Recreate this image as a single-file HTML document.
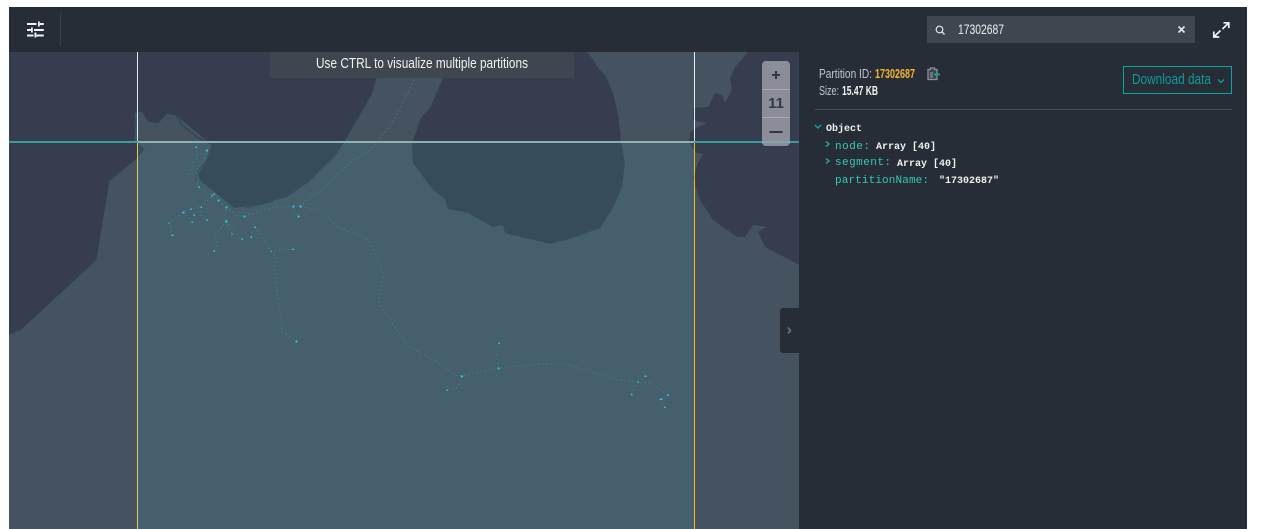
<!DOCTYPE html>
<html><head><meta charset="utf-8"><style>
html,body{margin:0;padding:0;background:#fff;width:1263px;height:529px;overflow:hidden}
svg{display:block}
text{font-family:"Liberation Sans",sans-serif}
.m{font-family:"Liberation Mono",monospace}
.t{fill:none;stroke:#2aa6c4;stroke-width:.7;stroke-dasharray:1 3.2;stroke-opacity:.85}
.n{fill:#27c8e2}
</style></head><body>
<svg width="1263" height="529" viewBox="0 0 1263 529" xmlns="http://www.w3.org/2000/svg">
<rect width="1263" height="529" fill="#fff"/>
<rect x="9" y="7" width="1238" height="522" fill="#272d37"/>
<rect x="9" y="52" width="790" height="477" fill="#455361"/>
<path fill="#353d4e" d="M9 52H386L376 78 372 93 343 143 334 157 310 181 287 197 257 205 235 208 200 180 199 173 207 160 212 145 176 115 167 113 158 123 148 121 142 112 134 113 134 140 145 149 137 158 109 181 96 260 20 330 9 334Z"/>
<path fill="#353d4e" d="M450 52H587L592 58 598 68 605 75 613 93 618 113 621 140 625 163 622 187 613 208 600 228 573 238 550 244 505 233 503 225 493 227 468 213 448 209 445 199 433 190 413 163 412 143 421 118 430 108 443 78Z"/>
<path fill="#353d4e" d="M693 108 708 107 715 93 722 95 725 103 732 90 730 78 735 67 743 58 748 52H799V265L765 247 758 232 767 227 753 225 745 237 737 237 713 220 700 200 693 178 698 163 703 154 695 152 689 142 690 132 698 127 707 123 700 122 693 120Z"/>
<path fill="none" stroke="#2f4450" stroke-width="1.200" d="M376 78 372 93 343 143 334 157 M334 157 300 186 270 202 245 208 M196 182 197 172 207 160 212 145 197 137 182 125 176 115 167 113 158 123 148 121 142 111 134 113 135 125 134 140"/>
<path fill="none" stroke="#30414f" stroke-width=".8" d="M137 158 109 181 96 260 20 330 9 334M235 208 200 180 199 173"/>
<rect x="138" y="142" width="556" height="387" fill="rgba(80,213,207,.1)"/>

<g class="t">
<path d="M196 147 198 157 194 162 188 177"/>
<path d="M207 150 205 158 197 170 196 180 199 187 212 195 214 194"/>
<path d="M214 194 201 207 191 209 183 212 169 223 171 230 172 235"/>
<path d="M191 209 194 215M183 212 192 222M201 207 201 215 207 220"/>
<path d="M214 194 218 200 226 207 224 220 226 221 214 238 218 243 214 251"/>
<path d="M226 221 242 239M226 221 232 234"/>
<path d="M226 207 237 216 244 216 255 227 251 237M255 227 271 251 277 258 274 265 277 290 279 307 282 323 282 332 296 341"/>
<path d="M271 251 293 249"/>
<path d="M244 216 270 208 293 206 298 216M293 206 300 206 322 211 337 227 368 239 378 258 383 273 379 303 397 330 410 348 432 359 457 376 462 376 498 368 530 365 563 363 617 380 638 382 650 383 668 395"/>
<path d="M300 206 327 185 335 177 350 163 370 150 387 130 400 108 415 78"/>
<path d="M462 376 458 387 447 390M498 368 497 350 499 343M638 382 645 376M638 382 631 394M668 395 662 399 660 399M662 399 664 407"/>
</g>
<g class="n">
<rect x="195.500" y="146.500" width="1.500" height="1.500"/><rect x="206" y="149.500" width="2" height="2"/><rect x="198.500" y="186.500" width="1.500" height="1.500"/><rect x="211.500" y="195" width="1.500" height="1.500"/><rect x="213.500" y="193.500" width="1.500" height="1.500"/><rect x="200.500" y="206.500" width="1.500" height="1.500"/><rect x="190.500" y="208.500" width="1.500" height="1.500"/><rect x="182.500" y="211.500" width="2" height="2"/><rect x="168.500" y="222.500" width="1.200" height="1.200"/><rect x="171.500" y="234.500" width="2" height="1.500"/><rect x="193.500" y="214.500" width="1.500" height="1.500"/><rect x="191.500" y="221.500" width="1.500" height="1.500"/><rect x="206.500" y="219.500" width="1.500" height="1.500"/><rect x="217.500" y="199.500" width="2" height="2"/><rect x="225.500" y="206.500" width="2" height="2"/><rect x="225" y="220.500" width="2.500" height="2"/><rect x="213.500" y="250.500" width="1.500" height="1.500"/><rect x="241.500" y="238.500" width="1.500" height="1.500"/><rect x="231.500" y="233.500" width="1.200" height="1.200"/><rect x="243.500" y="215.500" width="2" height="2"/><rect x="254.500" y="226.500" width="1.500" height="1.500"/><rect x="250.500" y="236.500" width="1.500" height="1.500"/><rect x="270.500" y="250.500" width="1.200" height="1.200"/><rect x="295.500" y="340.500" width="2" height="2"/><rect x="292.500" y="248.500" width="1.500" height="1.500"/><rect x="292.500" y="205.500" width="2" height="2"/><rect x="297.500" y="215.500" width="2" height="2"/><rect x="299.500" y="205.500" width="2" height="2"/>
<rect x="461" y="375.500" width="2" height="2"/><rect x="446.500" y="389.500" width="1.500" height="1.500"/><rect x="498" y="367.500" width="1.500" height="2"/><rect x="498.500" y="342.500" width="1.500" height="1.500"/><rect x="637.500" y="381.500" width="1.500" height="1.500"/><rect x="644.500" y="375.500" width="2" height="1.500"/><rect x="631" y="394" width="1.500" height="1.500"/><rect x="667.500" y="394.500" width="1.500" height="1.500"/><rect x="659.500" y="398.500" width="3" height="1.500"/><rect x="664" y="406.500" width="1.500" height="1.500"/>
</g>

<rect x="9" y="141" width="129" height="2" fill="#3a9a9c"/>
<rect x="138" y="141" width="556" height="2" fill="#8fb0b0"/>
<rect x="694" y="141" width="105" height="2" fill="#3a9a9c"/>
<rect x="137" y="52" width="1" height="89" fill="#d8f0f5"/>
<rect x="137" y="143" width="1" height="386" fill="#e9c75c"/>
<rect x="694" y="52" width="1" height="89" fill="#d8f4f5"/>
<rect x="694" y="143" width="1" height="386" fill="#f5b921"/>

<rect x="270" y="52" width="304" height="26" fill="#3f4650"/>
<text x="316" y="68" font-size="14.500" fill="#f2f2f2" textLength="212" lengthAdjust="spacingAndGlyphs">Use CTRL to visualize multiple partitions</text>

<rect x="762" y="61" width="28" height="85" rx="4" fill="#8b8e9a"/>
<rect x="762" y="89" width="28" height="1" fill="#a8abb5"/>
<rect x="762" y="117" width="28" height="1" fill="#a8abb5"/>
<rect x="762" y="141" width="28" height="2" fill="#7fa6ab"/>
<path d="M772 75H780M776 71V79" stroke="#33383f" stroke-width="2"/>
<text x="776" y="108" text-anchor="middle" font-size="15" font-weight="bold" fill="#33383f">11</text>
<rect x="769.500" y="131" width="13" height="2" fill="#33383f"/>

<path d="M799 308H783a3 3 0 0 0-3 3V350a3 3 0 0 0 3 3H799Z" fill="#272d37"/>
<path d="M788 327.500 790.500 330.500 788 333.500" fill="none" stroke="#6f7680" stroke-width="1.500"/>

<rect x="60" y="13" width="1" height="33" fill="#3a404a"/>
<g fill="#f2f2f2">
<rect x="27" y="23" width="9.500" height="2"/><rect x="38" y="21.500" width="1.800" height="5"/><rect x="39.800" y="23" width="4" height="2"/>
<rect x="27" y="29" width="4" height="2"/><rect x="31" y="27.500" width="1.800" height="5"/><rect x="34" y="29" width="9.800" height="2"/>
<rect x="27" y="34.500" width="6.500" height="2"/><rect x="34.500" y="32.500" width="1.800" height="5"/><rect x="36.300" y="34.500" width="7.500" height="2"/>
</g>

<rect x="927" y="16" width="268" height="27" fill="#3f4650"/>
<circle cx="939.500" cy="29.500" r="3.300" fill="none" stroke="#e4e6e8" stroke-width="1.200"/>
<path d="M942 32 944.500 34.500" stroke="#e4e6e8" stroke-width="1.400"/>
<text x="958" y="34" font-size="14" fill="#eef0f0" textLength="46" lengthAdjust="spacingAndGlyphs">17302687</text>
<path d="M1178.500 26.500 1184.500 32.500M1184.500 26.500 1178.500 32.500" stroke="#e8e8e8" stroke-width="1.600"/>
<g fill="none" stroke="#f2f2f2" stroke-width="1.700">
<path d="M1223.500 22.800H1228.800V28.100M1228.800 22.800 1222.500 29"/>
<path d="M1213.800 31.500V37H1219.300M1213.800 37 1220.500 30.500"/>
</g>

<text x="819" y="78" font-size="12.500" fill="#c2c6ca" textLength="53" lengthAdjust="spacingAndGlyphs">Partition ID:</text>
<text x="875" y="78" font-size="12.500" font-weight="bold" fill="#f5b52e" textLength="40" lengthAdjust="spacingAndGlyphs">17302687</text>
<text x="819" y="95" font-size="12.500" fill="#c2c6ca" textLength="20" lengthAdjust="spacingAndGlyphs">Size:</text>
<text x="842" y="95" font-size="12.500" font-weight="bold" fill="#f4f4f4" textLength="36" lengthAdjust="spacingAndGlyphs">15.47 KB</text>
<path d="M928 69.500H930.500V68H934.500V69.500H937V79.500H928Z" fill="#3d434c" stroke="#8b929a" stroke-width="1.300"/>
<path d="M930 73H933M930 75H933M930 77H933" stroke="#9aa0a8" stroke-width="1"/>
<path d="M934 74.500H940" stroke="#0aa8a5" stroke-width="1.800"/>

<rect x="1123.500" y="66.500" width="108" height="27" fill="none" stroke="#07a5a2" stroke-width="1"/>
<text x="1132" y="84" font-size="14.500" fill="#0c9c9a" textLength="79" lengthAdjust="spacingAndGlyphs">Download data</text>
<path d="M1218 79.500 1221 82.500 1224 79.500" fill="none" stroke="#0c9c9a" stroke-width="1.300"/>
<rect x="815" y="109" width="417" height="1" fill="#4a4f58"/>

<path d="M815 125 818 128 821 125" fill="none" stroke="#11a5a0" stroke-width="1.400"/>
<path d="M826 141.500 829 144 826 146.500" fill="none" stroke="#19b0a8" stroke-width="1.400"/>
<path d="M826 158.500 829 161 826 163.500" fill="none" stroke="#19b0a8" stroke-width="1.400"/>
<g class="m">
<text x="826" y="131" class="m" font-size="10" font-weight="bold" fill="#f0f0f0">Object</text>
<text x="835" y="149" class="m" font-size="11" fill="#35c8b4" textLength="35">node:</text>
<text x="876" y="149" class="m" font-size="10" font-weight="bold" fill="#f0f0f0">Array [40]</text>
<text x="835" y="165" class="m" font-size="11" fill="#35c8b4" textLength="56">segment:</text>
<text x="897" y="166" class="m" font-size="10" font-weight="bold" fill="#f0f0f0">Array [40]</text>
<text x="835" y="183" class="m" font-size="11" fill="#35c8b4" textLength="94">partitionName:</text>
<text x="939" y="183" class="m" font-size="10" font-weight="bold" fill="#f0f0f0">"17302687"</text>
</g>
</svg>
</body></html>
